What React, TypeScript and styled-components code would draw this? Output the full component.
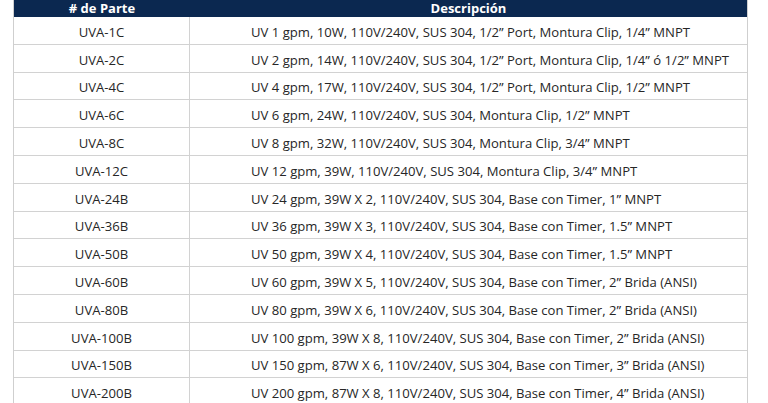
import styled, { createGlobalStyle } from 'styled-components';

const ROWS: [string, string][] = [
  ['UVA-1C', 'UV 1 gpm, 10W, 110V/240V, SUS 304, 1/2” Port, Montura Clip, 1/4” MNPT'],
  ['UVA-2C', 'UV 2 gpm, 14W, 110V/240V, SUS 304, 1/2” Port, Montura Clip, 1/4” ó 1/2” MNPT'],
  ['UVA-4C', 'UV 4 gpm, 17W, 110V/240V, SUS 304, 1/2” Port, Montura Clip, 1/2” MNPT'],
  ['UVA-6C', 'UV 6 gpm, 24W, 110V/240V, SUS 304, Montura Clip, 1/2” MNPT'],
  ['UVA-8C', 'UV 8 gpm, 32W, 110V/240V, SUS 304, Montura Clip, 3/4” MNPT'],
  ['UVA-12C', 'UV 12 gpm, 39W, 110V/240V, SUS 304, Montura Clip, 3/4” MNPT'],
  ['UVA-24B', 'UV 24 gpm, 39W X 2, 110V/240V, SUS 304, Base con Timer, 1” MNPT'],
  ['UVA-36B', 'UV 36 gpm, 39W X 3, 110V/240V, SUS 304, Base con Timer, 1.5” MNPT'],
  ['UVA-50B', 'UV 50 gpm, 39W X 4, 110V/240V, SUS 304, Base con Timer, 1.5” MNPT'],
  ['UVA-60B', 'UV 60 gpm, 39W X 5, 110V/240V, SUS 304, Base con Timer, 2” Brida (ANSI)'],
  ['UVA-80B', 'UV 80 gpm, 39W X 6, 110V/240V, SUS 304, Base con Timer, 2” Brida (ANSI)'],
  ['UVA-100B', 'UV 100 gpm, 39W X 8, 110V/240V, SUS 304, Base con Timer, 2” Brida (ANSI)'],
  ['UVA-150B', 'UV 150 gpm, 87W X 6, 110V/240V, SUS 304, Base con Timer, 3” Brida (ANSI)'],
  ['UVA-200B', 'UV 200 gpm, 87W X 8, 110V/240V, SUS 304, Base con Timer, 4” Brida (ANSI)'],
];

export default function App() {
  return (
    <>
      <GlobalStyle />
      <Page>
        <Table>
          <HeaderCell># de Parte</HeaderCell>
          <HeaderCell>Descripción</HeaderCell>
          {ROWS.map(([part, desc]) => (
            <Row key={part}>
              <PartCell>{part}</PartCell>
              <DescCell>{desc}</DescCell>
            </Row>
          ))}
        </Table>
      </Page>
    </>
  );
}

const GlobalStyle = createGlobalStyle`
  html, body {
    margin: 0;
    padding: 0;
    background: #ffffff;
    overflow: hidden;
  }
`;

const Page = styled.div`
  width: 768px;
  height: 403px;
  overflow: hidden;
  padding-left: 13px;
  box-sizing: border-box;
  font-family: 'Open Sans', 'Noto Sans', sans-serif;
  color: #262626;
`;

const Table = styled.div`
  width: 735px;
  display: grid;
  grid-template-columns: 176px 1fr;
  grid-auto-rows: 27.8px;
  grid-template-rows: 17px;
  border-left: 1.5px solid #cfcfcf;
  border-right: 1.5px solid #cfcfcf;
  box-sizing: border-box;
`;

const HeaderCell = styled.div`
  background: #0b2850;
  color: #ffffff;
  font-weight: 700;
  font-size: 13px;
  display: flex;
  align-items: center;
  justify-content: center;
  line-height: 1;
  padding-bottom: 1px;
  box-sizing: border-box;
`;

const Row = styled.div`
  display: contents;
`;

const Cell = styled.div`
  display: flex;
  align-items: center;
  border-bottom: 1.5px solid #d2d2d2;
  font-size: 13.1px;
  line-height: 1;
  white-space: nowrap;
  box-sizing: border-box;
  padding-top: 4px;
`;

const PartCell = styled(Cell)`
  justify-content: center;
  border-right: 1.5px solid #d2d2d2;
`;

const DescCell = styled(Cell)`
  padding-left: 61px;
`;
